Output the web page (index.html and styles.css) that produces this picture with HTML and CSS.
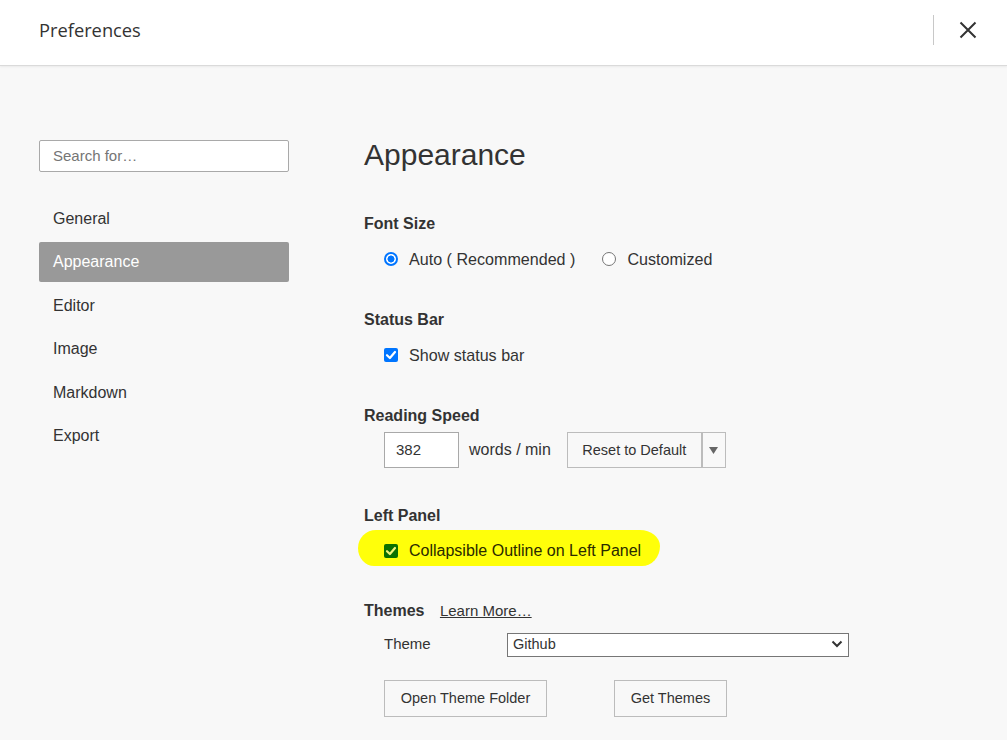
FILE: index.html
```html
<!DOCTYPE html>
<html>
<head>
<meta charset="utf-8">
<link rel="stylesheet" href="styles.css">
</head>
<body>
<header class="header">
  <div class="title">Preferences</div>
  <div class="header-right">
    <span class="divider"></span>
    <button class="close" aria-label="Close">
      <svg width="18" height="18" viewBox="0 0 18 18"><path d="M1.5 1.5 L16.5 16.5 M16.5 1.5 L1.5 16.5" stroke="#333" stroke-width="2" fill="none"/></svg>
    </button>
  </div>
</header>
<div class="main">
  <aside class="sidebar">
    <div class="search">Search for…</div>
    <nav class="nav">
      <div class="nav-item">General</div>
      <div class="nav-item active">Appearance</div>
      <div class="nav-item">Editor</div>
      <div class="nav-item">Image</div>
      <div class="nav-item">Markdown</div>
      <div class="nav-item">Export</div>
    </nav>
  </aside>
  <section class="content">
    <h1 class="page-title">Appearance</h1>

    <div class="group g-font">
      <h3 class="group-title">Font Size</h3>
      <div class="row">
        <span class="radio checked"></span><span class="label">Auto ( Recommended )</span>
        <span class="radio"></span><span class="label">Customized</span>
      </div>
    </div>

    <div class="group g-status">
      <h3 class="group-title">Status Bar</h3>
      <div class="row">
        <span class="cb"><svg viewBox="0 0 14 14" width="14" height="14"><path d="M3 7.2 L5.9 10 L11 4" stroke="#fff" stroke-width="2.2" fill="none" stroke-linecap="round" stroke-linejoin="round"/></svg></span>
        <span class="label">Show status bar</span>
      </div>
    </div>

    <div class="group g-speed">
      <h3 class="group-title">Reading Speed</h3>
      <div class="row speed-row">
        <div class="num-input">382</div>
        <span class="unit">words / min</span>
        <div class="split-btn">
          <span class="split-main">Reset to Default</span>
          <span class="split-arrow"><svg width="9" height="7" viewBox="0 0 9 7"><path d="M0 0 H9 L4.5 7 Z" fill="#666"/></svg></span>
        </div>
      </div>
    </div>

    <div class="group g-left">
      <h3 class="group-title">Left Panel</h3>
      <div class="highlight">
        <span class="cb green"><svg viewBox="0 0 14 14" width="14" height="14"><path d="M3 7.2 L5.9 10 L11 4" stroke="#f4f47a" stroke-width="2.2" fill="none" stroke-linecap="round" stroke-linejoin="round"/></svg></span>
        <span class="label hl-label">Collapsible Outline on Left Panel</span>
      </div>
    </div>

    <div class="group g-themes">
      <h3 class="group-title">Themes <a class="link">Learn More…</a></h3>
      <div class="theme-row">
        <span class="theme-label">Theme</span>
        <div class="select">
          <span>Github</span>
          <svg width="12" height="8" viewBox="0 0 12 8"><path d="M1.5 1.5 L6 6 L10.5 1.5" stroke="#333" stroke-width="2" fill="none"/></svg>
        </div>
      </div>
      <div class="btn-row">
        <div class="btn btn-open">Open Theme Folder</div>
        <div class="btn btn-get">Get Themes</div>
      </div>
    </div>
  </section>
</div>
</body>
</html>
```
FILE: styles.css
```css
* { box-sizing: border-box; }
html, body { margin: 0; padding: 0; }
body {
  width: 1007px;
  height: 740px;
  overflow: hidden;
  background: #f8f8f8;
  font-family: "Liberation Sans", Arial, sans-serif;
  color: #333;
}
.header {
  height: 66px;
  background: #fff;
  border-bottom: 1px solid #dadada;
  box-shadow: 0 1px 2px rgba(0,0,0,0.06);
  display: flex;
  align-items: center;
  justify-content: space-between;
  padding-left: 39px;
  padding-bottom: 6px;
}
.title {
  font-family: "Open Sans", sans-serif;
  font-size: 18.3px;
  color: #333;
}
.header-right {
  display: flex;
  align-items: center;
  padding-right: 30px;
}
.divider {
  width: 1px;
  height: 30px;
  background: #c8c8c8;
  margin-right: 25px;
}
.close {
  border: 0;
  background: none;
  padding: 0;
  width: 18px;
  height: 18px;
  display: flex;
}
.main {
  display: flex;
}
.sidebar {
  width: 250px;
  margin-left: 39px;
  padding-top: 74px;
}
.search {
  height: 32px;
  border: 1px solid #a9a9a9;
  border-radius: 2px;
  background: #fff;
  padding-left: 13px;
  font-size: 15px;
  line-height: 30px;
  color: #757575;
}
.nav {
  margin-top: 27px;
  display: flex;
  flex-direction: column;
  gap: 3.4px;
}
.nav-item {
  height: 40px;
  line-height: 40px;
  padding-left: 14px;
  font-size: 16px;
  color: #333;
  border-radius: 2px;
}
.nav-item.active {
  background: #999;
  color: #fff;
}
.content {
  margin-left: 75px;
  padding-top: 72px;
  flex: 1;
}
.page-title {
  margin: 0;
  font-weight: normal;
  font-size: 30px;
  line-height: 34px;
  color: #333;
}
.group-title {
  margin: 0;
  font-size: 16px;
  font-weight: bold;
  line-height: 20px;
  color: #333;
}
.g-font { margin-top: 42px; }
.g-status { margin-top: 41px; }
.g-speed { margin-top: 41px; }
.g-left { margin-top: 38px; }
.g-themes { margin-top: 35px; }
.row {
  display: flex;
  align-items: center;
  height: 20px;
  margin-top: 15px;
  padding-left: 20px;
  font-size: 16.1px;
}
.label { margin-left: 11px; }
.radio {
  width: 14px;
  height: 14px;
  border-radius: 50%;
  border: 1px solid #767676;
  background: #fff;
  flex: none;
}
.radio.checked {
  border: 2px solid #0075ff;
  background: radial-gradient(circle, #0075ff 0 3.2px, #fff 3.8px);
}
.radio + .label + .radio { margin-left: 27px; }
.cb {
  width: 14px;
  height: 14px;
  border-radius: 2px;
  background: #0075ff;
  display: flex;
  flex: none;
}
.cb.green { background: #0b7000; }
.speed-row {
  height: 36px;
  margin-top: 6px;
}
.num-input {
  width: 75px;
  height: 36px;
  border: 1px solid #a9a9a9;
  background: #fff;
  padding-left: 11px;
  line-height: 34px;
  font-size: 15px;
}
.unit {
  margin-left: 10px;
  font-size: 16px;
}
.split-btn {
  margin-left: 16px;
  display: flex;
  height: 36px;
  border: 1px solid #bcbcbc;
}
.split-main {
  width: 135px;
  line-height: 34px;
  text-align: center;
  font-size: 14.5px;
  border-right: 2px solid #bcbcbc;
}
.split-arrow {
  width: 22px;
  display: flex;
  align-items: center;
  justify-content: center;
}
.highlight {
  display: inline-flex;
  align-items: center;
  margin-top: 4px;
  margin-left: -6px;
  padding-left: 26px;
  padding-top: 5px;
  width: 302px;
  height: 36px;
  background: #ffff0a;
  border-radius: 18px 20px 18px 16px / 18px 16px 20px 18px;
  font-size: 16px;
}
.hl-label { color: #2a2a00; }
.link {
  margin-left: 11px;
  font-weight: normal;
  font-size: 15px;
  text-decoration: underline;
  color: #333;
}
.theme-row {
  display: flex;
  align-items: center;
  margin-top: 12px;
  padding-left: 20px;
  height: 24px;
}
.theme-label {
  width: 123px;
  font-size: 15px;
  margin-top: -3px;
}
.select {
  width: 342px;
  height: 24px;
  border: 1px solid #767676;
  background: #fff;
  display: flex;
  align-items: center;
  justify-content: space-between;
  padding: 0 5px 2px 5px;
  font-size: 14.5px;
}
.btn-row {
  display: flex;
  gap: 67px;
  margin-top: 23px;
  padding-left: 20px;
}
.btn {
  height: 37px;
  border: 1px solid #bcbcbc;
  font-size: 14.5px;
  line-height: 35px;
  text-align: center;
}
.btn-open { width: 163px; }
.btn-get { width: 113px; }
```
